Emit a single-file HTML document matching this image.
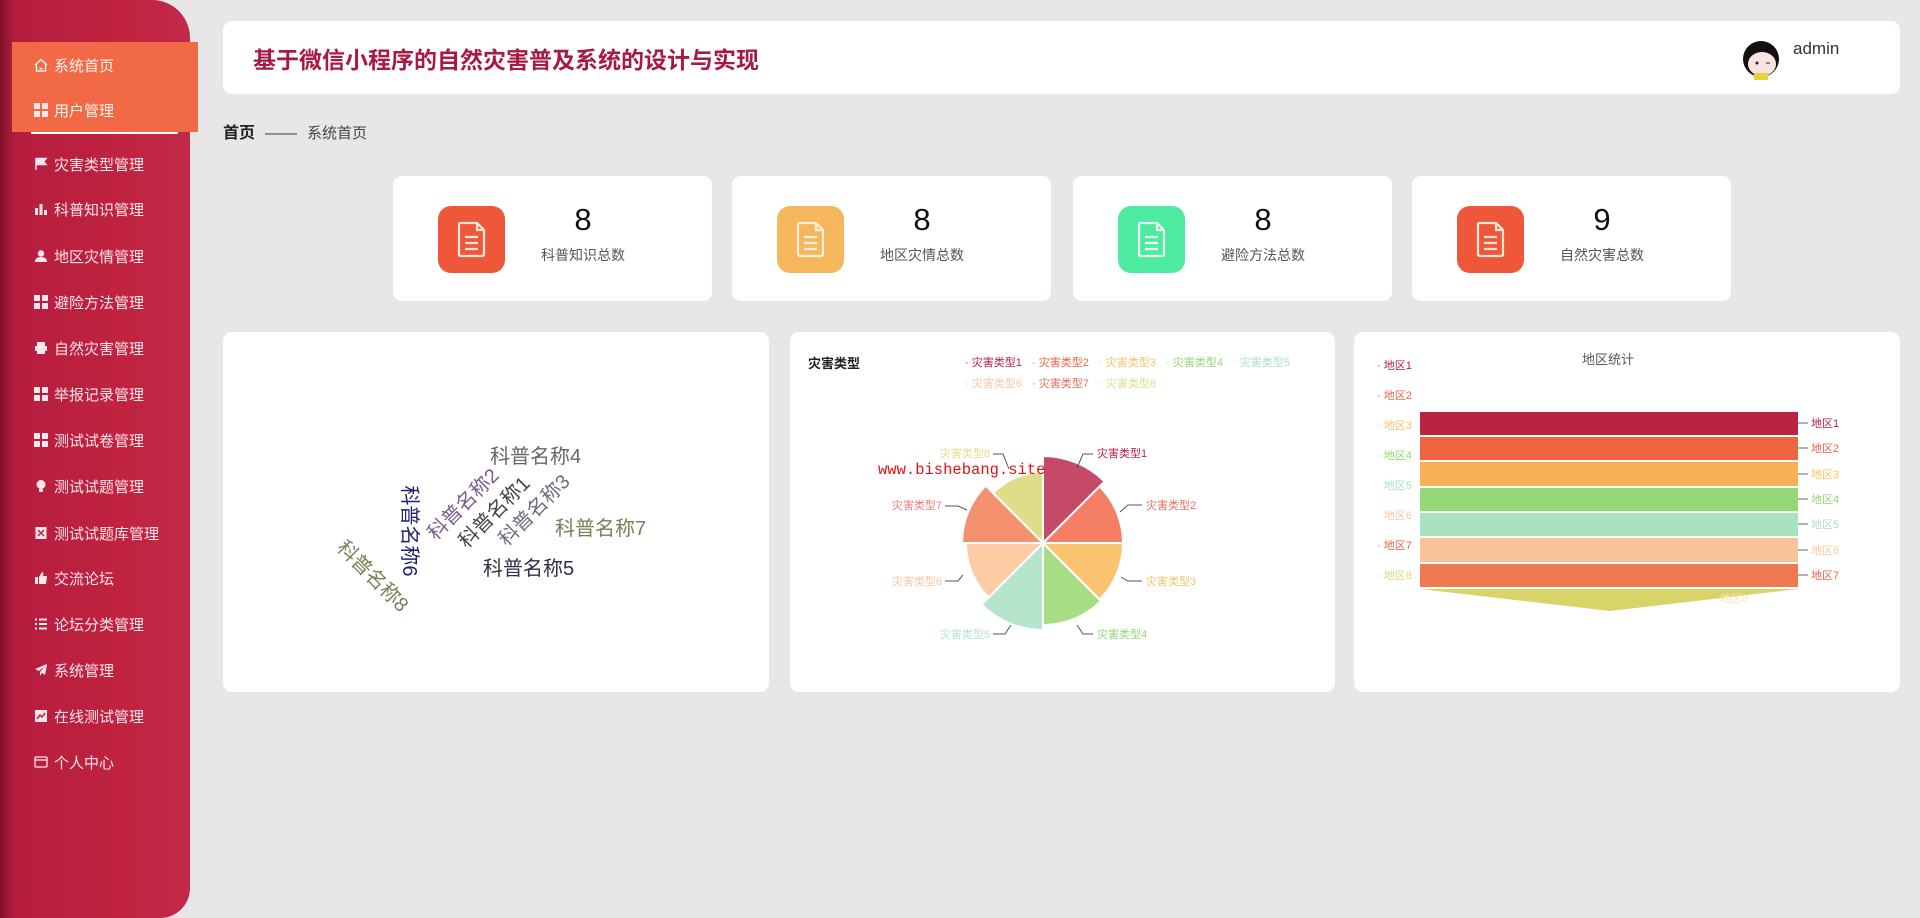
<!DOCTYPE html>
<html><head><meta charset="utf-8">
<style>
*{margin:0;padding:0;box-sizing:border-box}
body{width:1920px;height:918px;background:#e9e6e7;font-family:"Liberation Sans","Noto Sans CJK SC",sans-serif;position:relative;overflow:hidden}
.side{position:absolute;left:0;top:0;width:190px;height:918px;background:linear-gradient(90deg,#7e1029 0,#b51d3f 14px,#c0223f 60%,#c22a48 100%);border-radius:0 38px 30px 0}
.mi{position:absolute;left:0;width:190px;height:46px;color:#fbe6ea;font-size:15px;display:flex;align-items:center;padding-left:34px}
.mi .ic{width:14px;height:14px;margin-right:6px;display:inline-block;flex:none}
.act{left:12px;width:186px;background:#f26a45;padding-left:22px;color:#fff3ee}
.card{position:absolute;background:#fff;border-radius:9px}
.mi .g4{display:grid;grid-template-columns:6px 6px;grid-template-rows:6px 6px;gap:2px}
.g4 i{display:block;background:#fbe6ea}
.stat .ico{position:absolute;left:45px;top:30px;width:67px;height:67px;border-radius:13px}
.stat .num{position:absolute;left:130px;width:120px;text-align:center;top:26px;font-size:31px;color:#111}
.stat .lb{position:absolute;left:130px;width:120px;text-align:center;top:69px;font-size:14px;color:#555}
</style></head><body>
<div class="side"></div>
<div class="mi act" style="top:42px;height:46px"><svg class="ic" viewBox="0 0 14 14"><path d="M1 7 L7 1.5 L13 7 M2.5 6 V13 H11.5 V6 M5.5 10 Q7 11.5 8.5 10" fill="none" stroke="#fff" stroke-width="1.3"/></svg>系统首页</div>
<div class="mi act" style="top:88px;height:44px"><span class="ic g4"><i></i><i></i><i></i><i></i></span>用户管理</div>
<div style="position:absolute;left:31px;top:132px;width:147px;height:2px;background:#fff"></div>
<div class="mi" style="top:141px"><svg class="ic" viewBox="0 0 14 14"><path d="M2 1 V13 M2 1.5 H12 L9.5 4.5 L12 7.5 H2" fill="#fbe6ea" stroke="#fbe6ea" stroke-width="1.5"/></svg>灾害类型管理</div>
<div class="mi" style="top:186px"><svg class="ic" viewBox="0 0 14 14"><rect x="1" y="6" width="3" height="7" fill="#fbe6ea"/><rect x="5.5" y="2" width="3" height="11" fill="#fbe6ea"/><rect x="10" y="8" width="3" height="5" fill="#fbe6ea"/></svg>科普知识管理</div>
<div class="mi" style="top:233px"><svg class="ic" viewBox="0 0 14 14"><circle cx="7" cy="4.5" r="3.2" fill="#fbe6ea"/><path d="M1 13 Q1 8 7 8 Q13 8 13 13 Z" fill="#fbe6ea"/></svg>地区灾情管理</div>
<div class="mi" style="top:279px"><span class="ic g4"><i></i><i></i><i></i><i></i></span>避险方法管理</div>
<div class="mi" style="top:325px"><svg class="ic" viewBox="0 0 14 14"><rect x="3" y="1" width="8" height="4" fill="#fbe6ea"/><rect x="1" y="5" width="12" height="5" rx="1" fill="#fbe6ea"/><rect x="3" y="10" width="8" height="3" fill="#fbe6ea"/></svg>自然灾害管理</div>
<div class="mi" style="top:371px"><span class="ic g4"><i></i><i></i><i></i><i></i></span>举报记录管理</div>
<div class="mi" style="top:417px"><span class="ic g4"><i></i><i></i><i></i><i></i></span>测试试卷管理</div>
<div class="mi" style="top:463px"><svg class="ic" viewBox="0 0 14 14"><circle cx="7" cy="5.5" r="4.5" fill="#fbe6ea"/><rect x="5" y="10" width="4" height="3" fill="#fbe6ea"/></svg>测试试题管理</div>
<div class="mi" style="top:510px"><svg class="ic" viewBox="0 0 14 14"><rect x="1.5" y="1" width="11" height="12" fill="#fbe6ea"/><path d="M4 4 L10 10 M10 4 L4 10" stroke="#c0223f" stroke-width="1.5"/></svg>测试试题库管理</div>
<div class="mi" style="top:555px"><svg class="ic" viewBox="0 0 14 14"><path d="M1 6 H4 V13 H1 Z M5 6 L8 1 Q10 1 9 5 H13 L12 13 H5 Z" fill="#fbe6ea"/></svg>交流论坛</div>
<div class="mi" style="top:601px"><svg class="ic" viewBox="0 0 14 14"><path d="M1 2.5 H3 M5 2.5 H13 M1 7 H3 M5 7 H13 M1 11.5 H3 M5 11.5 H13" stroke="#fbe6ea" stroke-width="2"/></svg>论坛分类管理</div>
<div class="mi" style="top:647px"><svg class="ic" viewBox="0 0 14 14"><path d="M13 1 L1 6 L5 8 L11 3 L6 9 V13 L8 10 L11 12 Z" fill="#fbe6ea"/></svg>系统管理</div>
<div class="mi" style="top:693px"><svg class="ic" viewBox="0 0 14 14"><rect x="1" y="1" width="12" height="12" fill="#fbe6ea"/><path d="M3 10 L6 6 L8 8 L11 4" stroke="#c0223f" stroke-width="1.5" fill="none"/></svg>在线测试管理</div>
<div class="mi" style="top:739px"><svg class="ic" viewBox="0 0 14 14"><rect x="1" y="2" width="12" height="10" rx="1" fill="none" stroke="#fbe6ea" stroke-width="1.3"/><path d="M1 5 H13" stroke="#fbe6ea" stroke-width="1.3"/></svg>个人中心</div>

<!-- header -->
<div class="card" style="left:223px;top:21px;width:1677px;height:73px">
 <div style="position:absolute;left:30px;top:28px;font-size:23px;font-weight:bold;color:#a81a43;line-height:1">基于微信小程序的自然灾害普及系统的设计与实现</div>
 <svg style="position:absolute;left:1518px;top:18px" width="40" height="42" viewBox="0 0 40 42"><circle cx="20" cy="20" r="18" fill="#111"/><ellipse cx="21" cy="25" rx="14" ry="12" fill="#f9e3e0"/><path d="M6 16 Q20 6 34 16 L34 12 Q20 0 6 12 Z" fill="#111"/><rect x="13" y="34" width="14" height="7" fill="#e3d43a"/><circle cx="16" cy="24" r="1.5" fill="#222"/><path d="M25 24 h4" stroke="#222"/></svg>
 <div style="position:absolute;left:1570px;top:18px;font-size:17px;color:#333">admin</div>
</div>
<div style="position:absolute;left:223px;top:119px;font-size:16px;color:#222"><b style="font-weight:bold">首页</b><span style="margin:0 10px;color:#444">——</span><span style="color:#444;font-size:15px">系统首页</span></div>

<!-- stats -->
<div class="card stat" style="left:393px;top:176px;width:319px;height:125px"><div class="ico" style="background:#ee573a"></div><svg style="position:absolute;left:64px;top:45px" width="29" height="37" viewBox="0 0 29 37"><path d="M3 2 H20 L27 9 V33 Q27 35 25 35 H4 Q2 35 2 33 V4 Q2 2 3 2 Z M20 2 V9 H27" fill="none" stroke="#fde8d8" stroke-width="2.2"/><path d="M8 16 H21 M8 22 H21 M8 28 H21" stroke="#fde8d8" stroke-width="2.2"/></svg><div class="num">8</div><div class="lb">科普知识总数</div></div>
<div class="card stat" style="left:732px;top:176px;width:319px;height:125px"><div class="ico" style="background:#f6b75c"></div><svg style="position:absolute;left:64px;top:45px" width="29" height="37" viewBox="0 0 29 37"><path d="M3 2 H20 L27 9 V33 Q27 35 25 35 H4 Q2 35 2 33 V4 Q2 2 3 2 Z M20 2 V9 H27" fill="none" stroke="#fdf0d8" stroke-width="2.2"/><path d="M8 16 H21 M8 22 H21 M8 28 H21" stroke="#fdf0d8" stroke-width="2.2"/></svg><div class="num">8</div><div class="lb">地区灾情总数</div></div>
<div class="card stat" style="left:1073px;top:176px;width:319px;height:125px"><div class="ico" style="background:#4feaa1"></div><svg style="position:absolute;left:64px;top:45px" width="29" height="37" viewBox="0 0 29 37"><path d="M3 2 H20 L27 9 V33 Q27 35 25 35 H4 Q2 35 2 33 V4 Q2 2 3 2 Z M20 2 V9 H27" fill="none" stroke="#e6fdf0" stroke-width="2.2"/><path d="M8 16 H21 M8 22 H21 M8 28 H21" stroke="#e6fdf0" stroke-width="2.2"/></svg><div class="num">8</div><div class="lb">避险方法总数</div></div>
<div class="card stat" style="left:1412px;top:176px;width:319px;height:125px"><div class="ico" style="background:#ee573a"></div><svg style="position:absolute;left:64px;top:45px" width="29" height="37" viewBox="0 0 29 37"><path d="M3 2 H20 L27 9 V33 Q27 35 25 35 H4 Q2 35 2 33 V4 Q2 2 3 2 Z M20 2 V9 H27" fill="none" stroke="#fde8d8" stroke-width="2.2"/><path d="M8 16 H21 M8 22 H21 M8 28 H21" stroke="#fde8d8" stroke-width="2.2"/></svg><div class="num">9</div><div class="lb">自然灾害总数</div></div>

<!-- charts -->
<div class="card" style="left:223px;top:332px;width:546px;height:360px"></div>
<div class="card" style="left:790px;top:332px;width:545px;height:360px"></div>
<div class="card" style="left:1354px;top:332px;width:546px;height:360px"></div>

<svg style="position:absolute;left:0;top:0" width="1920" height="918" font-family="Liberation Sans, Noto Sans CJK SC, sans-serif">
 <g font-size="20">
  <text x="490" y="463" fill="#666">科普名称4</text>
  <text x="555" y="535" fill="#7b7e55">科普名称7</text>
  <text x="483" y="575" fill="#2f2f48">科普名称5</text>
  <text transform="translate(410,531) rotate(90)" text-anchor="middle" dy="7" fill="#22226e">科普名称6</text>
  <text transform="translate(463,504) rotate(-45)" text-anchor="middle" dy="7" fill="#7a5c8c">科普名称2</text>
  <text transform="translate(494,512) rotate(-45)" text-anchor="middle" dy="7" fill="#444">科普名称1</text>
  <text transform="translate(534,510) rotate(-45)" text-anchor="middle" dy="7" fill="#6c6c82">科普名称3</text>
  <text transform="translate(373,576) rotate(45)" text-anchor="middle" dy="7" fill="#7b7e55">科普名称8</text>
 </g>
 <text x="808" y="368" font-size="13" font-weight="bold" fill="#222">灾害类型</text>
 <g font-size="11">
  <text x="965" y="366" fill="#b51e44">· 灾害类型1</text>
  <text x="1032" y="366" fill="#e9654a">· 灾害类型2</text>
  <text x="1099" y="366" fill="#f2c46a">· 灾害类型3</text>
  <text x="1166" y="366" fill="#93d776">· 灾害类型4</text>
  <text x="1233" y="366" fill="#a8e2c8">· 灾害类型5</text>
  <text x="965" y="387" fill="#f9c6a0">· 灾害类型6</text>
  <text x="1032" y="387" fill="#e96d5a">· 灾害类型7</text>
  <text x="1099" y="387" fill="#e2dc8a">· 灾害类型8</text>
 </g>
 <g transform="translate(1043,543)" stroke="#fff" stroke-width="2" stroke-linejoin="round">
  <path d="M0 0 L0 -87 A87 87 0 0 1 61.5 -61.5 Z" fill="#c54a68"/>
  <path d="M0 0 L56.6 -56.6 A80 80 0 0 1 80 0 Z" fill="#f47f64"/>
  <path d="M0 0 L80 0 A80 80 0 0 1 56.6 56.6 Z" fill="#f9c36f"/>
  <path d="M0 0 L58 58 A82 82 0 0 1 0 82 Z" fill="#a7dd85"/>
  <path d="M0 0 L0 87 A87 87 0 0 1 -61.5 61.5 Z" fill="#b5e5cc"/>
  <path d="M0 0 L-54.4 54.4 A77 77 0 0 1 -77 0 Z" fill="#fdcba4"/>
  <path d="M0 0 L-81 0 A81 81 0 0 1 -57.3 -57.3 Z" fill="#f3916f"/>
  <path d="M0 0 L-50 -50 A71 71 0 0 1 0 -71 Z" fill="#e0dd8a"/>
 </g>
 <g fill="none" stroke="#555" stroke-width="1">
  <path d="M1077 468 L1083 454 H1093"/><path d="M1120 512 L1128 505 H1142"/><path d="M1121 577 L1128 581 H1142"/><path d="M1077 625 L1083 634 H1093"/>
  <path d="M1011 625 L1005 634 H993"/><path d="M963 575 L958 581 H945"/><path d="M967 510 L958 506 H945"/><path d="M1009 469 L1003 454 H993"/>
 </g>
 <g font-size="11">
  <text x="1097" y="457" fill="#b5234a">灾害类型1</text>
  <text x="1146" y="509" fill="#ec7060">灾害类型2</text>
  <text x="1146" y="585" fill="#f2c46a">灾害类型3</text>
  <text x="1097" y="638" fill="#93d776">灾害类型4</text>
  <text x="990" y="638" text-anchor="end" fill="#b3e2cc">灾害类型5</text>
  <text x="942" y="585" text-anchor="end" fill="#f7c6a2">灾害类型6</text>
  <text x="942" y="509" text-anchor="end" fill="#ec7f78">灾害类型7</text>
  <text x="990" y="457" text-anchor="end" fill="#e2dc8a">灾害类型8</text>
 </g>
 <text x="878" y="474" font-family="Liberation Mono, monospace" font-size="15.5" fill="#e01414">www.bishebang.site</text>
 <text x="1608" y="364" text-anchor="middle" font-size="13" fill="#555">地区统计</text>
 <g font-size="11">
  <text x="1377" y="369" fill="#b51e44">· 地区1</text>
  <text x="1377" y="399" fill="#e9654a">· 地区2</text>
  <text x="1377" y="429" fill="#f2c46a">· 地区3</text>
  <text x="1377" y="459" fill="#93d776">· 地区4</text>
  <text x="1377" y="489" fill="#a8e2c8">· 地区5</text>
  <text x="1377" y="519" fill="#f9c6a0">· 地区6</text>
  <text x="1377" y="549" fill="#e9654a">· 地区7</text>
  <text x="1377" y="579" fill="#dcd77a">· 地区8</text>
 </g>
 <rect x="1420" y="412" width="378" height="23" fill="#bb2343"/>
 <rect x="1420" y="437" width="378" height="23" fill="#f0643f"/>
 <rect x="1420" y="462" width="378" height="24" fill="#f5b153"/>
 <rect x="1420" y="488" width="378" height="23" fill="#93d776"/>
 <rect x="1420" y="513" width="378" height="23" fill="#a8e2c0"/>
 <rect x="1420" y="538" width="378" height="24" fill="#f9c499"/>
 <rect x="1420" y="564" width="378" height="23" fill="#ef7a51"/>
 <path d="M1420 589 H1798 L1610 611 Z" fill="#d9d46a"/>
 <g stroke="#666" stroke-width="1"><path d="M1798 423 H1808 M1798 448 H1808 M1798 474 H1808 M1798 499 H1808 M1798 524 H1808 M1798 550 H1808 M1798 575 H1808"/></g>
 <g font-size="11">
  <text x="1811" y="427" fill="#b51e44">地区1</text>
  <text x="1811" y="452" fill="#e9654a">地区2</text>
  <text x="1811" y="478" fill="#f2c46a">地区3</text>
  <text x="1811" y="503" fill="#93d776">地区4</text>
  <text x="1811" y="528" fill="#a8e2c8">地区5</text>
  <text x="1811" y="554" fill="#f9c6a0">地区6</text>
  <text x="1811" y="579" fill="#e9654a">地区7</text>
  <text x="1720" y="602" fill="#f1ebb0">地区8</text>
 </g>
</svg>
</body></html>
